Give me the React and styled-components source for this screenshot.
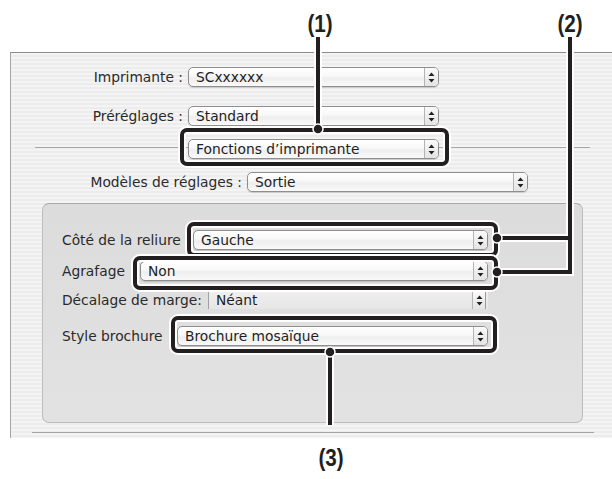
import React from 'react'
import styled, { createGlobalStyle } from 'styled-components'

const GlobalStyle = createGlobalStyle`
  html, body { margin: 0; padding: 0; background: #fff; }
  body { font-family: "DejaVu Sans", "Liberation Sans", sans-serif; color: #2a2a2a; }
`

const Page = styled.div`
  position: relative;
  width: 612px;
  height: 479px;
  padding: 52px 0 0 10px;
  box-sizing: border-box;
  overflow: hidden;
`

const Window = styled.div`
  width: 602px;
  height: 386px;
  box-sizing: border-box;
  border-top: 1px solid #8c8c8c;
  border-left: 1px solid #a4a4a4;
  background: repeating-linear-gradient(180deg, #f4f4f4 0 2px, #ececec 2px 4px);
  display: flex;
  flex-direction: column;
  padding-top: 14px;
`

const Row = styled.div`
  display: flex;
  align-items: center;
  height: 20px;
  margin-top: ${p => p.$mt || 0}px;
  padding-left: ${p => p.$pl || 0}px;
`

const Label = styled.span`
  width: ${p => p.$w}px;
  flex: none;
  box-sizing: border-box;
  text-align: ${p => (p.$left ? 'left' : 'right')};
  padding-right: ${p => (p.$left ? 0 : 5)}px;
  font-size: 13.8px;
  white-space: nowrap;
`

const SepRow = styled.div`
  position: relative;
  display: flex;
  align-items: center;
  height: 20px;
  margin: 13px 0 0 24px;
  width: 555px;
  padding-left: 153px;
  box-sizing: border-box;
  &::before {
    content: '';
    position: absolute;
    left: 0;
    right: 0;
    top: 8px;
    border-top: 1px solid #a8a8a8;
  }
`

const Popup = styled.div`
  position: relative;
  width: ${p => p.$w}px;
  height: 20px;
  box-sizing: border-box;
  border: 1px solid #8e8e8e;
  border-radius: 5px;
  background: linear-gradient(180deg, #ffffff 0%, #f8f8f8 45%, #eeeeee 55%, #f9f9f9 100%);
  box-shadow: 0 1px 1px rgba(0, 0, 0, 0.15);
  display: flex;
  align-items: center;
  font-size: 13.8px;
  color: #1e1e1e;
`

const FlatPopup = styled(Popup)`
  border: none;
  border-left: 1px solid #a0a0a0;
  border-radius: 0;
  box-shadow: none;
  background: linear-gradient(180deg, #efefef 0%, #e6e6e6 100%);
  height: 18px;
`

const PopupText = styled.span`
  flex: 1;
  padding-left: 7px;
  white-space: nowrap;
`

const Stepper = styled.span`
  width: 14px;
  height: 100%;
  flex: none;
  box-sizing: border-box;
  border-left: 1px solid #b4b4b4;
  border-right: ${p => (p.$boxed ? '1px solid #9a9a9a' : 'none')};
  margin-right: ${p => (p.$boxed ? 2 : 0)}px;
  background: linear-gradient(180deg, #fafafa, #e4e4e4);
  border-radius: ${p => (p.$boxed ? 0 : '0 4px 4px 0')};
  display: flex;
  align-items: center;
  justify-content: center;
`

const Group = styled.div`
  margin: 11px 0 0 31px;
  width: 541px;
  height: 220px;
  box-sizing: border-box;
  border: 1px solid #bdbdbd;
  border-top-color: #a9a9a9;
  border-radius: 7px;
  background: linear-gradient(180deg, #dcdcdc 0%, #e2e2e2 100%);
  padding-top: 26px;
`

const BottomRule = styled.div`
  margin: 9px 0 0 21px;
  width: 562px;
  border-top: 1px solid #a4a4a4;
`

const Number = styled.div`
  position: absolute;
  left: ${p => p.$x}px;
  top: ${p => p.$y}px;
  transform: translateX(-50%) scaleX(0.86);
  font-family: "Liberation Sans", sans-serif;
  font-weight: bold;
  font-size: 24px;
  line-height: 1;
  color: #231f20;
`

const Callout = styled.div`
  position: absolute;
  left: ${p => p.$x}px;
  top: ${p => p.$y}px;
  width: ${p => p.$w}px;
  height: ${p => p.$h}px;
  box-sizing: border-box;
  border: 4px solid #231f20;
  border-radius: 7px;
  box-shadow: 0 0 0 2px #fff, inset 0 0 0 2px #fff;
`

const Leaders = styled.svg`
  position: absolute;
  left: 0;
  top: 0;
  pointer-events: none;
`

const Arrows = () => (
  <svg width="7" height="11" viewBox="0 0 7 11">
    <path d="M3.5 0.5 L6.5 4 L0.5 4 Z" fill="#222" />
    <path d="M3.5 10.5 L6.5 7 L0.5 7 Z" fill="#222" />
  </svg>
)

const Select = ({ w, value }) => (
  <Popup $w={w}>
    <PopupText>{value}</PopupText>
    <Stepper><Arrows /></Stepper>
  </Popup>
)

const leaderPaths = [
  'M318 37 L318 129',
  'M570 37 L570 272 L497 272 M570 238 L497 238',
  'M330 352 L330 425',
]
const dots = [[318, 129], [497, 238], [497, 272], [330, 352]]

export default function App() {
  return (
    <Page>
      <GlobalStyle />
      <Window>
        <Row>
          <Label $w={177}>Imprimante :</Label>
          <Select w={251} value="SCxxxxxx" />
        </Row>
        <Row $mt={19}>
          <Label $w={177}>Préréglages :</Label>
          <Select w={251} value="Standard" />
        </Row>
        <SepRow>
          <Select w={251} value="Fonctions d’imprimante" />
        </SepRow>
        <Row $mt={13}>
          <Label $w={236}>Modèles de réglages :</Label>
          <Select w={281} value="Sortie" />
        </Row>
        <Group>
          <Row $pl={19}>
            <Label $left $w={131}>Côté de la reliure</Label>
            <Select w={295} value="Gauche" />
          </Row>
          <Row $pl={19} $mt={11}>
            <Label $left $w={78}>Agrafage</Label>
            <Select w={348} value="Non" />
          </Row>
          <Row $pl={19} $mt={9}>
            <Label $left $w={146}>Décalage de marge:</Label>
            <FlatPopup $w={280}>
              <PopupText>Néant</PopupText>
              <Stepper $boxed><Arrows /></Stepper>
            </FlatPopup>
          </Row>
          <Row $pl={19} $mt={16}>
            <Label $left $w={115}>Style brochure</Label>
            <Select w={311} value="Brochure mosaïque" />
          </Row>
        </Group>
        <BottomRule />
      </Window>

      <Number $x={320} $y={12}>(1)</Number>
      <Number $x={570} $y={12}>(2)</Number>
      <Number $x={331} $y={446}>(3)</Number>

      <Callout $x={180} $y={128} $w={269} $h={38} />
      <Callout $x={187} $y={222} $w={311} $h={35} />
      <Callout $x={133} $y={256} $w={365} $h={34} />
      <Callout $x={171} $y={316} $w={326} $h={37} />

      <Leaders width="612" height="479">
        {leaderPaths.map(d => (
          <path key={'w' + d} d={d} stroke="#fff" strokeWidth="8" fill="none" />
        ))}
        {leaderPaths.map(d => (
          <path key={'b' + d} d={d} stroke="#231f20" strokeWidth="4" fill="none" />
        ))}
        {dots.map(([x, y]) => (
          <circle key={x + '-' + y} cx={x} cy={y} r="5" fill="#231f20" stroke="#fff" strokeWidth="1.5" />
        ))}
      </Leaders>
    </Page>
  )
}
